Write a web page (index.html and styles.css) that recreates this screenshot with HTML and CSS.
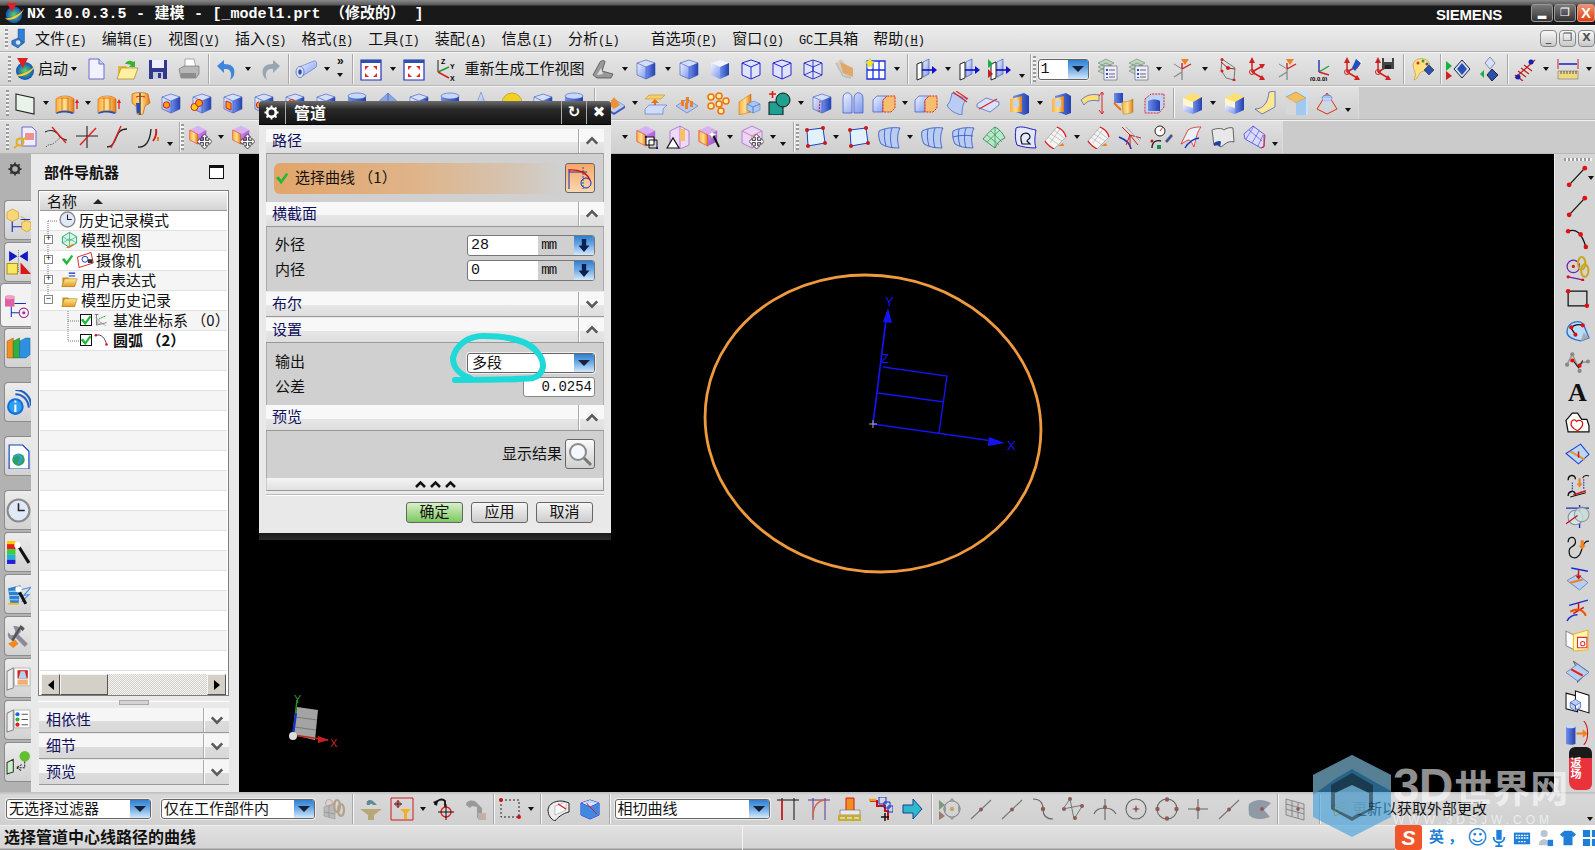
FILE: index.html
```html
<!DOCTYPE html>
<html lang="zh-CN">
<head>
<meta charset="utf-8">
<title>NX 10.0.3.5 - 建模</title>
<link rel="stylesheet" href="styles.css">
</head>
<body>
<svg class="defs" width="0" height="0" aria-hidden="true">
<defs>
<linearGradient id="bl" x1="0" y1="0" x2="1" y2="1"><stop offset="0" stop-color="#eef2ff"/><stop offset="1" stop-color="#7d98ee"/></linearGradient>
<linearGradient id="br" x1="0" y1="0" x2="1" y2="0"><stop offset="0" stop-color="#6f8fe8"/><stop offset="1" stop-color="#2340b0"/></linearGradient>
<linearGradient id="og" x1="0" y1="0" x2="1" y2="0"><stop offset="0" stop-color="#ffb040"/><stop offset=".5" stop-color="#ffe090"/><stop offset="1" stop-color="#e07810"/></linearGradient>
<linearGradient id="yl" x1="0" y1="0" x2="0" y2="1"><stop offset="0" stop-color="#ffe890"/><stop offset="1" stop-color="#e89a20"/></linearGradient>
<linearGradient id="pu" x1="0" y1="0" x2="1" y2="1"><stop offset="0" stop-color="#d090f0"/><stop offset="1" stop-color="#9040c0"/></linearGradient>
<radialGradient id="gb"><stop offset="0" stop-color="#60d060"/><stop offset="1" stop-color="#1050c0"/></radialGradient>

<symbol id="mlg" viewBox="0 0 20 24"><path d="M9 1h7v15l-4 3-3-2z" fill="#2f80d8" stroke="#114a90" stroke-width=".6"/><path d="M9 1l3-1h5l-1 1z" fill="#a8d0f4"/><path d="M2 14l7-3 6 5-6 6-7-4z" fill="#3a78c8" stroke="#114a90" stroke-width=".6"/><circle cx="9" cy="16" r="2.500" fill="#d8e8f8"/></symbol>
<symbol id="cube" viewBox="0 0 24 24"><path d="M3 6 12 3l9 3-9 4z" fill="#d3def9"/><path d="M3 6l9 4v12l-9-4z" fill="url(#bl)"/><path d="M12 10l9-4v12l-9 4z" fill="url(#br)"/><path d="M3 6 12 3l9 3v12l-9 4-9-4zM3 6l9 4 9-4M12 10v12" fill="none" stroke="#3a55c0" stroke-width=".6"/></symbol>
<symbol id="cubef" viewBox="0 0 24 24"><path d="M3 6 12 3l9 3-9 4z" fill="#f0f4ff"/><path d="M3 6l9 4v12l-9-4z" fill="url(#bl)"/><path d="M12 10l9-4v12l-9 4z" fill="url(#br)"/></symbol>
<symbol id="wire" viewBox="0 0 24 24"><path d="M3 6 12 3l9 3v12l-9 4-9-4z" fill="#dfe4fb"/><path d="M3 6 12 3l9 3v12l-9 4-9-4zM3 6l9 4 9-4M12 10v12" fill="none" stroke="#2424d8" stroke-width="1"/></symbol>
<symbol id="wire2" viewBox="0 0 24 24"><path d="M3 6 12 3l9 3v12l-9 4-9-4z" fill="#dfe4fb"/><path d="M3 6 12 3l9 3v12l-9 4-9-4zM3 6l9 4 9-4M12 10v12M3 18l9-4 9 4M12 3v11" fill="none" stroke="#2424c0" stroke-width=".9"/></symbol>
<symbol id="nx" viewBox="0 0 24 24"><circle cx="12" cy="14" r="9" fill="url(#gb)"/><path d="M2 18C8 22 20 16 23 7c-3 5-12 11-21 11z" fill="#ffd030"/><path d="M4 1h11l-5 10z" fill="#e02020"/></symbol>
<symbol id="doc" viewBox="0 0 24 24"><path d="M5 2h10l5 5v15H5z" fill="#f2f2ff" stroke="#6a6ad0"/><path d="M15 2v5h5" fill="#d0d0f8" stroke="#6a6ad0"/></symbol>
<symbol id="folder" viewBox="0 0 24 24"><path d="M3 9h8l2 2h7v10H3z" fill="#e0b840"/><path d="M2 22 6 11h17l-4 11z" fill="#fff0a0" stroke="#a88820" stroke-width=".7"/><path d="M10 7c2-4 6-4 8-2l2-1v6h-6l2-2c-2-1-4-1-6-1z" fill="#38b030"/></symbol>
<symbol id="save" viewBox="0 0 24 24"><path d="M3 3h18v19H3z" fill="#303890"/><path d="M6 3h12v8H6z" fill="#eef"/><path d="M7 15h10v7H7z" fill="#c8c8d8"/><path d="M12 16h3v5h-3z" fill="#303890"/></symbol>
<symbol id="print" viewBox="0 0 24 24"><path d="M8 2h9l2 9H8z" fill="#fff" stroke="#777" stroke-width=".6"/><path d="M2 12l5-3h15v8l-3 4H4z" fill="#b8b8b8" stroke="#666" stroke-width=".6"/><path d="M4 16h15v5H4z" fill="#8c8c8c"/></symbol>
<symbol id="undo" viewBox="0 0 24 24"><path d="M2 9l7-6v4c7 0 12 3 10 11-1 3-3 4-4 5 1-3 2-6 0-9-1-2-3-2-6-2v4z" fill="#3f86d8"/></symbol>
<symbol id="redo" viewBox="0 0 24 24"><path d="M22 9l-7-6v4C8 7 3 10 5 18c1 3 3 4 4 5-1-3-2-6 0-9 1-2 3-2 6-2v4z" fill="#96a6b2"/></symbol>
<symbol id="tube" viewBox="0 0 24 24"><path d="M5 10 20 4c3-1 4 5 1 7L7 20z" fill="url(#bl)" stroke="#5070c0" stroke-width=".6"/><ellipse cx="6" cy="15" rx="4" ry="5.500" fill="#d8e4fa" stroke="#4060b0" stroke-width=".7"/><ellipse cx="6" cy="15" rx="1.800" ry="2.800" fill="#3050a0"/></symbol>
<symbol id="fit" viewBox="0 0 24 24"><path d="M2 3h20v20H2z" fill="#fff" stroke="#2030c0" stroke-width="1.200"/><path d="M2 3h20v3H2z" fill="#2a50b0"/><path d="M6 9h4l-4 4zM18 9h-4l4 4zM6 20h4l-4-4zM18 20h-4l4-4z" fill="#e82820"/></symbol>
<symbol id="xyz" viewBox="0 0 24 24"><path d="M5 15V3" stroke="#222" fill="none"/><path d="M5 15l11-5" stroke="#20a030" stroke-width="1.500" fill="none"/><path d="M5 15l11 6" stroke="#d02020" stroke-width="1.500" fill="none"/><text x="8" y="7" font-size="7" font-family="Liberation Sans" font-weight="700">Z</text><text x="17" y="12" font-size="7" font-family="Liberation Sans" font-weight="700">Y</text><text x="17" y="24" font-size="7" font-family="Liberation Sans" font-weight="700">X</text></symbol>
<symbol id="shade" viewBox="0 0 24 24"><path d="M2 18 9 5c2-2 5-2 5 0l-3 9 11 3-2 4H6z" fill="#999" stroke="#444" stroke-width=".7"/><path d="M6 18l4-7 2 6z" fill="#ddd"/></symbol>
<symbol id="sect" viewBox="0 0 24 24"><path d="M4 6l5-4 11 12-1 7-8-4z" fill="#cfc8b8" opacity=".8"/><path d="M8 5l13 6v9l-10-4z" fill="#e0a868"/><path d="M4 6l7 13 8 2" fill="none" stroke="#b8b8b8" stroke-width="1.400"/></symbol>
<symbol id="wgrid" viewBox="0 0 24 24"><path d="M4 4h18v18H4zM10 4v18M16 4v18M4 13h18" fill="#fff" stroke="#1a30e0" stroke-width="1.300"/><path d="M7 1l1.500 3 3.500 1-3 2 .5 3.500L7 9l-3 2 .5-4-3-2 3.500-1z" fill="#ffe020" stroke="#8cc" stroke-width=".5"/></symbol>
<symbol id="slab" viewBox="0 0 24 24"><path d="M9 5l6-3v15l-6 3z" fill="url(#bl)" stroke="#3050b0" stroke-width=".6"/><path d="M3 7l5-2v16l-5 2z" fill="#fff" stroke="#222"/><path d="M8 13h11" stroke="#1010c8" stroke-width="1.600"/><path d="M18 9l5 4-5 4z" fill="#1010c8"/></symbol>
<symbol id="slab2" viewBox="0 0 24 24"><use href="#slab" width="24" height="24"/><path d="M0 2l5 5-5 4z" fill="#18b040"/><path d="M0 12l5 5-5 4z" fill="#c82020"/></symbol>
<symbol id="layers" viewBox="0 0 24 24"><path d="M3 6l8-4 8 4-8 4zM3 10l8-4 8 4-8 4zM3 14l8-4 8 4-8 4z" fill="#b8d8b8" stroke="#667" stroke-width=".5"/><path d="M9 9h13v14H9z" fill="#eef" stroke="#556" stroke-width=".6"/><path d="M11 12h2v2h-2zM11 16h2v2h-2zM11 20h2v1h-2z" fill="#2850c0"/><path d="M14 13h6M14 17h6M14 20h6" stroke="#666"/></symbol>
<symbol id="cs1" viewBox="0 0 24 24"><path d="M11 12V23M11 15l-8 5" stroke="#888" stroke-width="1.300" fill="none"/><path d="M11 12l9-5M11 12V6" stroke="#d02020" stroke-width="1.400" fill="none"/><path d="M10 2h8l-4 6z" fill="#f08020"/><path d="M11 12 3 7" stroke="#888"/></symbol>
<symbol id="cs2" viewBox="0 0 24 24"><path d="M8 2l13 9-1 12-8-2-5-8z" fill="none" stroke="#777"/><g fill="#d02020"><circle cx="8" cy="2.500" r="1.500"/><circle cx="8" cy="14" r="1.500"/><circle cx="20" cy="23" r="1.500"/><circle cx="14" cy="11" r="2"/></g><path d="M7 5l7 6 7 1" stroke="#a02020" fill="none"/></symbol>
<symbol id="cs3" viewBox="0 0 24 24"><path d="M7 15V2" stroke="#d02020" stroke-width="1.500"/><path d="M7 15l12-7M7 15l12 7" stroke="#d02020" stroke-width="1.500"/><path d="M7 0 4 6h6z" fill="#d02020"/><path d="M20 7l-6 0 3 5zM20 23l-6 0 3-5z" fill="#d02020"/><circle cx="7" cy="15" r="2.500" fill="none" stroke="#d02020"/></symbol>
<symbol id="cs4" viewBox="0 0 24 24"><path d="M10 15V3" stroke="#2030c0" stroke-width="1.400"/><path d="M10 15l10-6" stroke="#20a030" stroke-width="1.400"/><path d="M10 15l10 3" stroke="#d02020" stroke-width="1.400"/><text x="1" y="24" font-size="6" font-family="Liberation Sans" font-weight="700">(0,0,0)</text></symbol>
<symbol id="cs5" viewBox="0 0 24 24"><use href="#cs3" width="24" height="24"/><path d="M16 2l5 4-6 8-3-3z" fill="#2050c0"/><path d="M17 2l5 4" stroke="#fff"/></symbol>
<symbol id="cs6" viewBox="0 0 24 24"><use href="#cs3" width="24" height="24"/><path d="M11 1h12v11H11z" fill="#444"/><path d="M13 1h8v4h-8z" fill="#ddd"/><path d="M14 8h6v4h-6z" fill="#222"/></symbol>
<symbol id="palette" viewBox="0 0 24 24"><path d="M3 5c4-6 17-4 16 5-1 5-8 3-10 6-2 2-2 6-6 7 1-3 2-5 1-8-1-3-3-6-1-10z" fill="#ffe080" stroke="#b89020" stroke-width=".6"/><circle cx="7" cy="6" r="1.500" fill="#d03030"/><circle cx="12" cy="4" r="1.500" fill="#30a030"/><circle cx="16" cy="7" r="1.500" fill="#3050d0"/><path d="M13 13l5-5 5 5-5 5z" fill="#2a50b0" stroke="#111" stroke-width=".5"/></symbol>
<symbol id="dia1" viewBox="0 0 24 24"><path d="M0 4l6 5-6 5z" fill="#18b040"/><path d="M0 14l6 5-6 4z" fill="#d02020"/><path d="M8 12l8-9 8 9-8 9z" fill="#cfe0f8" stroke="#223"/><path d="M11 12l5-6 5 6-5 6z" fill="#2a50b0"/></symbol>
<symbol id="dia2" viewBox="0 0 24 24"><path d="M8 6l5-6 5 6-5 6z" fill="#d4e2fa" stroke="#88a"/><path d="M3 17l4-4v8z" fill="#18b040"/><path d="M10 18l5-6 6 6-6 6z" fill="#2a50b0" stroke="#223"/></symbol>
<symbol id="ruled" viewBox="0 0 24 24"><path d="M2 21 22 3M2 18l8 6M5 14l8 6M8 11l8 6M11 8l8 6" stroke="#c02020" stroke-width="1.300" fill="none"/><circle cx="5" cy="20" r="2.500" fill="#1520b0"/><circle cx="18" cy="5" r="2.500" fill="#1520b0"/></symbol>
<symbol id="meas" viewBox="0 0 24 24"><path d="M2 2v10M22 2v10" stroke="#d02020"/><path d="M3 7h18" stroke="#1520c0" stroke-width="1.500"/><path d="M2 14h20v8H2z" fill="#f0d880" stroke="#777" stroke-width=".6"/><path d="M5 14v3M8 14v3M11 14v3M14 14v3M17 14v3M20 14v3" stroke="#555"/></symbol>
<symbol id="plane" viewBox="0 0 24 24"><path d="M3 3l18 4v16L3 19z" fill="#e8f4e8" stroke="#222" stroke-width="1.100"/></symbol>
<symbol id="ext" viewBox="0 0 24 24"><path d="M1 8c4-4 14-4 18 0v14c-4-3-14-3-18 0z" fill="url(#og)" stroke="#d06000" stroke-width=".6"/><path d="M1 8c4-3 14-3 18 0" fill="#ffa040"/><path d="M7 7v13M13 7v13" stroke="#b06000" stroke-width=".7"/><path d="M1 22c4-3 14-3 18 0l-2 1c-4-2-12-2-15 0z" fill="#2050c0"/><path d="M22 10v8" stroke="#e02020" stroke-width="1.300"/><path d="M20 12l2-4 2 4z" fill="#e02020"/></symbol>
<symbol id="rev" viewBox="0 0 24 24"><path d="M4 3c4-2 12-2 16 0l2 9-5 3-2 8-3 1-3-1-1-8-4-3z" fill="url(#og)" stroke="#c05000" stroke-width=".6"/><path d="M12 2v22" stroke="#222" stroke-width="1.200"/><path d="M8 6c3-1 6-1 9 0" stroke="#d02020" fill="none"/><path d="M8 12h4v11l-3-1z" fill="#2050c0"/></symbol>
<symbol id="cubeh" viewBox="0 0 24 24"><use href="#cube" width="24" height="24"/><circle cx="7.500" cy="14" r="3.200" fill="#f8a010" stroke="#d02020"/></symbol>
<symbol id="cubeb" viewBox="0 0 24 24"><use href="#cube" width="24" height="24"/><circle cx="4.500" cy="16" r="3.500" fill="#f8d010" stroke="#d02020"/><circle cx="9" cy="12" r="3.500" fill="#f8a010" stroke="#d02020"/></symbol>
<symbol id="cubep" viewBox="0 0 24 24"><use href="#cube" width="24" height="24"/><path d="M5 10l5 2v7l-5-2z" fill="#f8a010" stroke="#d02020"/></symbol>
<symbol id="cyl" viewBox="0 0 24 24"><path d="M3 5v15c2 3 16 3 18 0V5z" fill="url(#br)"/><ellipse cx="12" cy="5" rx="9" ry="3" fill="#c8d6f8" stroke="#4060c0" stroke-width=".6"/></symbol>
<symbol id="cone" viewBox="0 0 24 24"><path d="M12 1 5 20c3 3 11 3 14 0z" fill="url(#bl)" stroke="#5070c0" stroke-width=".5"/></symbol>
<symbol id="sph" viewBox="0 0 24 24"><circle cx="12" cy="12" r="10" fill="#f4d020" stroke="#a89010" stroke-width=".6"/></symbol>
<symbol id="pyr" viewBox="0 0 24 24"><path d="M12 2 1 12l11 8 11-8z" fill="#8aa4e8" stroke="#5070c0" stroke-width=".6"/><path d="M12 2v18" stroke="#5070c0"/></symbol>
<symbol id="pad" viewBox="0 0 24 24"><path d="M1 15l11-7 11 7-11 7z" fill="#c0d0f4" stroke="#5070c0" stroke-width=".6"/><path d="M1 15v2l11 7 11-7v-2l-11 7z" fill="#3a58c0"/><path d="M7 14l5-8 6 8-6 4z" fill="#f09030"/></symbol>
<symbol id="oset" viewBox="0 0 24 24"><path d="M5 4h16l-4 4H1z" fill="#f8d060" stroke="#c08010" stroke-width=".5"/><path d="M11 18V11" stroke="#f07010" stroke-width="2"/><path d="M7 12l4-4 4 4z" fill="#f07010"/><path d="M1 18l4-4h18l-4 4v5H1z" fill="#d0dcfa" stroke="#5070c0" stroke-width=".6"/></symbol>
<symbol id="pins" viewBox="0 0 24 24"><path d="M1 15 12 8l11 7-11 7z" fill="#b8c8f0" stroke="#5070c0" stroke-width=".6"/><g fill="#f08020"><path d="M6 9h3v6H6zM11 6h3v6h-3zM15 10h3v6h-3zM10 12h3v6h-3z"/></g></symbol>
<symbol id="hexp" viewBox="0 0 24 24"><g fill="#fff0a0" stroke="#f07010" stroke-width="1.500"><circle cx="5" cy="6" r="3"/><circle cx="13" cy="5" r="3"/><circle cx="20" cy="10" r="3"/><circle cx="5" cy="15" r="3"/><circle cx="13" cy="13" r="3"/><circle cx="15" cy="20" r="3"/></g></symbol>
<symbol id="split" viewBox="0 0 24 24"><path d="M2 11 14 3v18L2 24z" fill="url(#og)" stroke="#d06000" stroke-width=".5"/><path d="M10 13l7-3 6 3-7 3zM10 13v6l6 3v-6zM16 16v6l7-3v-6z" fill="#a8c8f4" stroke="#5070c0" stroke-width=".5"/></symbol>
<symbol id="teal" viewBox="0 0 24 24"><path d="M1 11h14v13H1z" fill="#20a090" stroke="#111"/><circle cx="15" cy="9" r="7" fill="#20a090" stroke="#111"/><path d="M1 3h7M4.500 0v7" stroke="#e01818" stroke-width="1.600"/></symbol>
<symbol id="boxd" viewBox="0 0 24 24"><use href="#cube" width="24" height="24"/><path d="M10 10l-1 12" stroke="#e02020" stroke-dasharray="2 1"/></symbol>
<symbol id="arch" viewBox="0 0 24 24"><path d="M2 22V7c0-7 9-7 9 0v15zM13 22V7c0-7 9-7 9 0v15z" fill="url(#bl)" stroke="#3a55c0" stroke-width=".7"/></symbol>
<symbol id="boxo" viewBox="0 0 24 24"><path d="M1 9l4-4h10l-4 4v12H1z" fill="url(#bl)" stroke="#3a55c0" stroke-width=".7"/><path d="M11 9l4-4h8v12l-4 4h-8z" fill="#f4c070" stroke="#e02020" stroke-dasharray="2 1"/></symbol>
<symbol id="srf" viewBox="0 0 24 24"><path d="M7 2 22 8c-4 3-5 9-5 16-7-1-14-6-15-10 3-2 4-7 5-12z" fill="#b8ccf4" stroke="#4060c0" stroke-width=".7"/><path d="M8 1l14 10M11 0l12 8" stroke="#e02020" stroke-width="1.100"/></symbol>
<symbol id="rhom" viewBox="0 0 24 24"><path d="M1 13l9-6 13 4v3l-9 7L1 16z" fill="#d8e2fa" stroke="#4060c0" stroke-width=".7"/><path d="M3 18 21 8" stroke="#e02020" stroke-width="1.200"/></symbol>
<symbol id="fram" viewBox="0 0 24 24"><path d="M6 5l11-3 5 3v17l-5 2L6 20z" fill="url(#br)"/><path d="M3 8l12-3v16H3z" fill="url(#og)"/><path d="M6 10l6-1v7H6z" fill="#c0d4f8"/></symbol>
<symbol id="ribb" viewBox="0 0 24 24"><path d="M1 9c6-6 13-6 18-5v6c-5-1-12-1-15 4z" fill="#ffe070" stroke="#3a55c0" stroke-width=".7"/><path d="M22 2v20M19 5l3-4 3 4M19 19l3 4 3-4" stroke="#e02020" fill="none"/></symbol>
<symbol id="ocyl" viewBox="0 0 24 24"><path d="M3 2h9v10H3z" fill="url(#br)"/><path d="M11 11c4 0 8-1 11-3v13c-3 2-7 2-10 2z" fill="url(#og)" stroke="#a08020" stroke-width=".5"/><path d="M3 12l7 7" stroke="#f07010" stroke-width="2"/></symbol>
<symbol id="rbox" viewBox="0 0 24 24"><path d="M3 8l6-5h13v13l-5 6H3z" fill="#c0d4f8" stroke="#e02020" stroke-dasharray="2 1"/><path d="M6 10c4-2 9-2 12 0v10H6z" fill="url(#br)"/></symbol>
<symbol id="cham" viewBox="0 0 24 24"><path d="M3 7l10-5 9 4-9 5z" fill="#ffe070"/><path d="M3 7l10 4v6L3 14z" fill="#fff6d0"/><path d="M3 14l10 3v6L3 20z" fill="url(#bl)"/><path d="M13 11l9-5v13l-9 4z" fill="url(#br)"/></symbol>
<symbol id="corn" viewBox="0 0 24 24"><path d="M16 1l6-1v16L9 23 2 18c8 0 13-6 14-17z" fill="#ffe890" stroke="#3050c0" stroke-width=".7"/></symbol>
<symbol id="pale" viewBox="0 0 24 24"><path d="M2 0h22v24H2z" fill="#c8e2f8"/><path d="M2 6l10-5 10 6-10 5z" fill="#f0c060" stroke="#c06020" stroke-width=".5"/><path d="M12 12v12H2V6z" fill="#d8d8d8"/><path d="M12 12l10-5v17H12z" fill="#a0c8f0"/></symbol>
<symbol id="wcone" viewBox="0 0 24 24"><path d="M12 2 2 18l10 5 10-5z" fill="none" stroke="#d83020"/><ellipse cx="12" cy="7" rx="5" ry="3" fill="#a8c4f4" stroke="#3050c0" stroke-width=".6"/><path d="M7 7 12 21 17 7" fill="#c8d8f8" opacity=".7"/></symbol>
<symbol id="keyd" viewBox="0 0 24 24"><path d="M9 2h10l4 4v15H9z" fill="#eef" stroke="#6a6ad0"/><path d="M12 8h9v7h-9z" fill="#f09090"/><circle cx="7" cy="17" r="3.500" fill="none" stroke="#e0b020" stroke-width="2"/><path d="M5 20l-4 3M14 12l-5 3" stroke="#e0b020" stroke-width="2"/></symbol>
<symbol id="cv1" viewBox="0 0 24 24"><path d="M1 7c8-4 13 1 15 5 3 2 5 3 7 3" fill="none" stroke="#222" stroke-width="1.100"/><path d="M2 22c3-4 5-1 8-4 4-3 4-4 6-5" fill="none" stroke="#666" stroke-dasharray="1.500 1"/><path d="M8 2l14 16" stroke="#e02020" stroke-width="1.400"/></symbol>
<symbol id="cv2" viewBox="0 0 24 24"><path d="M12 1v22M1 11h22" stroke="#222" stroke-width="1.100"/><path d="M5 20 21 3" stroke="#e02020" stroke-width="1.400"/></symbol>
<symbol id="cv3" viewBox="0 0 24 24"><path d="M1 22c5 0 7-4 9-9s4-9 11-9" fill="none" stroke="#222" stroke-width="1.300"/><path d="M15 1 5 23" stroke="#e02020" stroke-width="1.400"/></symbol>
<symbol id="cv4" viewBox="0 0 24 24"><path d="M1 22c7 1 12-5 13-18" fill="none" stroke="#222" stroke-width="1.300"/><path d="M19 4c1 5 0 8-3 12" fill="none" stroke="#d02020" stroke-width="2"/><path d="M21 12v4" stroke="#f08020" stroke-width="2"/></symbol>
<symbol id="pcube" viewBox="0 0 24 24"><path d="M2 6l10-5 10 5-10 5z" fill="#d8b0f4"/><path d="M2 6l10 5v12L2 18z" fill="url(#og)" stroke="#e02020" stroke-width=".6"/><path d="M12 11l10-5v12l-10 5z" fill="url(#pu)"/></symbol>
<symbol id="mv" viewBox="0 0 14 14"><path d="M7 0l3 3H8v3h3V4l3 3-3 3V8H8v3h2l-3 3-3-3h2V8H3v2L0 7l3-3v2h3V3H4z" fill="#fff" stroke="#111" stroke-width=".7"/></symbol>
<symbol id="pmv" viewBox="0 0 24 24"><use href="#pcube" width="20" height="20"/><use href="#mv" x="9" y="9" width="15" height="15"/></symbol>
<symbol id="prc" viewBox="0 0 24 24"><use href="#pcube" width="22" height="22"/><path d="M11 12h8v8h-8z" fill="#fff" stroke="#111"/><path d="M14 15h8v8h-8z" fill="none" stroke="#111"/><g fill="#1010c0"><path d="M10 11h2v2h-2zM21 22h2v2h-2z"/></g></symbol>
<symbol id="ptr" viewBox="0 0 24 24"><path d="M4 6l10-5 9 5v14l-9 4-10-4z" fill="#f0d8f8" stroke="#b080d0"/><path d="M14 1v23" stroke="#b080d0"/><path d="M14 4h5v12h-5z" fill="#f8c060"/><path d="M1 23l6-10 6 10z" fill="#fff" stroke="#111" stroke-width="1.200"/></symbol>
<symbol id="pwd" viewBox="0 0 24 24"><use href="#pcube" width="22" height="22"/><path d="M16 10l6 12" stroke="#111" stroke-width="2"/><path d="M15 4l1 4 4 1-4 2-1 3-1-3-3-2 3-1z" fill="#fff" stroke="#888" stroke-width=".4"/></symbol>
<symbol id="pmv2" viewBox="0 0 24 24"><path d="M2 6l10-5 10 5v12l-10 5-10-5z" fill="#ead4f8" stroke="#b080d0"/><path d="M2 6l10 5 10-5M12 11v12" fill="none" stroke="#e08090"/><use href="#mv" x="9" y="9" width="15" height="15"/></symbol>
<symbol id="quad" viewBox="0 0 24 24"><path d="M4 5l16-2 2 15-17 3z" fill="#e2f2fc" stroke="#2040c0"/><g fill="#c81818"><circle cx="4" cy="5" r="2"/><circle cx="20" cy="3" r="2"/><circle cx="22" cy="18" r="2"/><circle cx="5" cy="21" r="2"/></g></symbol>
<symbol id="rib" viewBox="0 0 24 24"><path d="M2 6c6-3 14-4 21-3-3 6-3 13-1 20-7 0-13-1-18-4C2 15 1 10 2 6z" fill="#b8ccf4" stroke="#3050c0" stroke-width=".8"/><path d="M8 4c-1 5-1 10 1 17M15 3c-2 6-2 13 0 20" fill="none" stroke="#3050c0" stroke-width=".8"/></symbol>
<symbol id="rib2" viewBox="0 0 24 24"><use href="#rib" width="24" height="24"/><path d="M2 12c7-2 13-2 20-1" fill="none" stroke="#3050c0" stroke-width=".8"/></symbol>
<symbol id="grn" viewBox="0 0 24 24"><path d="M1 14C6 8 10 4 13 2c4 2 8 6 10 11-5 2-8 5-10 10-4-3-8-6-12-9z" fill="#b8e8c8" stroke="#208050" stroke-width=".8"/><path d="M5 10l12 10M9 6l11 11M13 2v21M5 17 18 5" stroke="#208050" stroke-width=".6"/></symbol>
<symbol id="bpt" viewBox="0 0 24 24"><path d="M3 3c6-3 13 1 20 2-1 6-2 12 0 18-7 0-14-1-19-3C2 15 2 9 3 3z" fill="#e4e8fc" stroke="#2020c0" stroke-width="1"/><path d="M8 15c-2-8 9-9 9-3 0 3-3 2-3 4l3 3H9z" fill="none" stroke="#111" stroke-width="1.200"/></symbol>
<symbol id="rgrid" viewBox="0 0 24 24"><path d="M1 16 13 2c5 2 8 6 9 10L10 24C7 22 3 20 1 16z" fill="#f4f4f4" stroke="#888" stroke-width=".5"/><path d="M4 12l11 8M7 9l11 7M10 5l11 9M6 18 16 4" stroke="#aaa" stroke-width=".6"/><path d="M1 16c2 4 6 6 9 8" fill="none" stroke="#e02020" stroke-width="1.300"/><path d="M13 2c5 2 8 6 9 10" fill="none" stroke="#e02020" stroke-width="1.300"/><path d="M14 21l5-3 1 3z" fill="#f08020"/></symbol>
<symbol id="frm" viewBox="0 0 24 24"><path d="M1 12c5 2 11 6 12 12" fill="none" stroke="#1030c0" stroke-width="1.600"/><path d="M12 10 4 2 M12 10l11 3M12 10V22M12 10l8 10M12 10l-4 10" stroke="#d02020" stroke-width="1"/><path d="M8 2l14 14" stroke="#aab" /></symbol>
<symbol id="dial" viewBox="0 0 24 24"><circle cx="11" cy="6" r="5" fill="#fff" stroke="#222"/><path d="M11 6l3-4" stroke="#d02020"/><path d="M16 16l6-7 2 2-6 7z" fill="#3050c0" stroke="#e0a020" stroke-width=".5"/><path d="M3 23c0-7 5-8 9-7" fill="none" stroke="#222" stroke-width="1.400"/><circle cx="3" cy="16" r="1.500" fill="#c01818"/><path d="M8 20h4v4H8z" fill="#109050"/></symbol>
<symbol id="brl" viewBox="0 0 24 24"><path d="M1 19 8 5c5-3 9-3 13-3-4 5-5 11-7 20-2-3-2-6-5-7-3 0-5 3-8 4z" fill="#e8f2f8" stroke="#e02020" stroke-width=".8"/><path d="M5 23c3-5 7-9 14-10" fill="none" stroke="#1030c0" stroke-width="1.300"/></symbol>
<symbol id="whts" viewBox="0 0 24 24"><path d="M1 5c5-2 10-2 12 0 2-2 7-3 9-2l1 14c-3-1-7 0-9 2l-4 3c-1-2-4-3-7-2z" fill="#e8e8e8" stroke="#444" stroke-width=".8"/><path d="M3 18c3-2 6-3 7-1l-1 5c-2-2-4-2-6-1z" fill="#2040a0"/></symbol>
<symbol id="pgrid" viewBox="0 0 24 24"><path d="M2 9l9-8 12 9-1 11-3 2-16-9z" fill="#dcdcfa" stroke="#5050e0" stroke-width=".9"/><path d="M7 5l13 11M12 1 4 14M17 6l-7 12M21 10l-5 11" stroke="#5050e0" stroke-width=".7"/><path d="M22 10v12l-3 1" fill="none" stroke="#e02020"/></symbol>

<symbol id="line" viewBox="0 0 24 24"><path d="M4 20 19 4" stroke="#111" stroke-width="1.200"/><circle cx="4" cy="20" r="2.300" fill="#e01010"/><circle cx="19" cy="4" r="2.300" fill="#e01010"/></symbol>
<symbol id="arc3" viewBox="0 0 24 24"><path d="M3 6c7-3 13 1 17 15" fill="none" stroke="#111" stroke-width="1.200"/><circle cx="3" cy="6" r="2.200" fill="#e01010"/><circle cx="15" cy="9" r="2.200" fill="#e01010"/><circle cx="20" cy="21" r="2.200" fill="#e01010"/></symbol>
<symbol id="ptch" viewBox="0 0 24 24"><circle cx="8" cy="10" r="6" fill="none" stroke="#7020b0" stroke-width="1.200"/><circle cx="8" cy="10" r="1.500" fill="#e01010"/><path d="M3 20l14 3" stroke="#7020b0" stroke-width="1.200"/><circle cx="3" cy="20" r="1.500" fill="#e01010"/><circle cx="17" cy="23" r="1.500" fill="#e01010"/><g fill="none" stroke="#c8a820" stroke-width="2"><ellipse cx="16" cy="7" rx="3.500" ry="6"/><ellipse cx="19" cy="14" rx="3.500" ry="6"/></g></symbol>
<symbol id="rect" viewBox="0 0 24 24"><path d="M3 4h18v14H3z" fill="none" stroke="#111" stroke-width="1.200"/><circle cx="3" cy="4" r="2.200" fill="#e01010"/><circle cx="21" cy="18" r="2.200" fill="#e01010"/></symbol>
<symbol id="bluearc" viewBox="0 0 24 24"><path d="M2 12C3 3 15 1 18 7l5 12-8 3C8 21 1 18 2 12z" fill="#b8ddf8" stroke="#2a70d0" stroke-width="1.300"/><path d="M18 14l5 5-8 3z" fill="#aaa"/><path d="M6 10c2-4 8-4 11-3M6 10l4 6" fill="none" stroke="#111" stroke-width="1.200"/><circle cx="6" cy="9" r="2" fill="#e01010"/><circle cx="17" cy="7" r="2" fill="#e01010"/><circle cx="10" cy="16" r="2" fill="#e01010"/></symbol>
<symbol id="stud" viewBox="0 0 24 24"><path d="M2 15l5-10 5 11 5-3 6-1" fill="none" stroke="#999" stroke-width="1.500"/><path d="M7 10l6 8 4-7" fill="none" stroke="#111"/><g fill="#888"><circle cx="2" cy="15" r="2"/><circle cx="7" cy="5" r="2"/><circle cx="22" cy="12" r="2"/><circle cx="14" cy="21" r="2"/></g><circle cx="7" cy="11" r="2" fill="#e01010"/><circle cx="14" cy="16" r="2" fill="#e01010"/></symbol>
<symbol id="heart" viewBox="0 0 24 24"><path d="M7 2h5l4 6h5l2 6v6H3L1 9z" fill="#fff" stroke="#111" stroke-width="1.200"/><path d="M12 19c-4-2-7-5-6-8 1-3 4-3 5-1 2-2 6-1 6 2 0 3-2 5-5 7z" fill="none" stroke="#e01010" stroke-width="1.200"/></symbol>
<symbol id="srfb" viewBox="0 0 24 24"><path d="M1 11 15 2l8 10-10 9z" fill="#b8d8f8" stroke="#2040d0" stroke-width="1"/><path d="M5 9l14 8" stroke="#e89030" stroke-width="2"/><path d="M13 15V9" stroke="#d01010" stroke-width="1.400"/></symbol>
<symbol id="cfold" viewBox="0 0 24 24"><path d="M3 7c0-6 7-6 7-1M3 22c0-5 7-6 7-1" fill="none" stroke="#111" stroke-width="1.300"/><path d="M17 5c1-3 5-3 6-2M5 23l15-4" stroke="#111" fill="none"/><path d="M7 9v10M18 6v10" stroke="#1030c0" stroke-dasharray="1.500 1"/><path d="M8 21l12-4" stroke="#d01010" stroke-width="1.400"/><path d="M13 5h2v5h2l-3 4-3-4h2z" fill="#f08020"/></symbol>
<symbol id="sphc" viewBox="0 0 24 24"><path d="M1 4h22M14 1v22" stroke="#1030c0" stroke-width="1.300"/><circle cx="10" cy="13" r="7" fill="#d0e4ea" stroke="#889"/><circle cx="16" cy="10" r="7" fill="#c8e0d8" opacity=".8" stroke="#889"/><path d="M1 19l11-8" stroke="#d01010" stroke-width="1.200"/></symbol>
<symbol id="cfold2" viewBox="0 0 24 24"><path d="M3 7c0-6 7-6 7-1 1 6-7 4-6 10 0 6 6 8 10 3 3-5 3-14 9-13" fill="none" stroke="#111" stroke-width="1.200"/><path d="M15 5h3v5h2l-3.500 4L13 10h2z" fill="#f08020"/></symbol>
<symbol id="plar" viewBox="0 0 24 24"><path d="M2 14 12 8l10 8-8 7z" fill="#b8cef0" stroke="#5070c0" stroke-width=".7"/><path d="M5 16l12-3" stroke="#f08020" stroke-width="2"/><path d="M6 2l16 3" stroke="#1030d0" stroke-width="1.400"/><path d="M13 4v7" stroke="#d01010" stroke-width="1.400"/><path d="M10 9h6l-3 4z" fill="#d01010"/></symbol>
<symbol id="crx" viewBox="0 0 24 24"><path d="M4 8l18-5M2 23c2-4 5-6 10-6" fill="none" stroke="#1030d0" stroke-width="1.400"/><path d="M13 5V12M8 16l10-6" stroke="#d01010" stroke-width="1.400"/><path d="M5 14c6-3 12-3 15 4" fill="none" stroke="#f05000" stroke-width="2"/></symbol>
<symbol id="bk" viewBox="0 0 24 24"><path d="M1 3l8 4v14L1 17z" fill="#fff" stroke="#888"/><path d="M8 6l14-4v19L8 22z" fill="#fff8b0" stroke="#f0b020"/><path d="M12 9h9v10h-9z" fill="#fff" stroke="#e03030"/><circle cx="17" cy="15" r="2" fill="none" stroke="#e03030"/></symbol>
<symbol id="dpl" viewBox="0 0 24 24"><path d="M8 2l14 10-10 10V10z" fill="#c8d8f0" stroke="#667"/><path d="M1 13 12 5l11 8-11 8z" fill="#b8cef0" stroke="#5070c0" stroke-width=".7"/><path d="M6 10l11 6" stroke="#e02010" stroke-width="2"/></symbol>
<symbol id="fr2" viewBox="0 0 24 24"><path d="M1 3l11 3v15L1 18z" fill="#fff" stroke="#111"/><path d="M10 1l13 4v17L10 18z" fill="#fff" stroke="#111"/><path d="M5 12l5-3 5 3-5 3zM5 12v5l5 3v-5zM15 12v5l-5 3" fill="#bcd0f4" stroke="#3050c0" stroke-width=".6"/></symbol>
<symbol id="cya" viewBox="0 0 24 24"><path d="M1 5v17c3 1 7 1 9 0V5z" fill="url(#br)"/><ellipse cx="5.500" cy="5" rx="4.500" ry="2" fill="#c8d6f8"/><path d="M11 12h8" stroke="#f08020" stroke-width="2"/><path d="M17 8l5 4-5 4z" fill="#f08020"/><path d="M18 0c5 5 5 18 0 23" fill="none" stroke="#d01010"/></symbol>

<symbol id="gline" viewBox="0 0 24 24"><path d="M2 22 22 3" stroke="#777" stroke-width="1.100"/><circle cx="12" cy="12.500" r="2" fill="#915a55"/></symbol>
<symbol id="gs" viewBox="0 0 24 24"><path d="M2 2c8 0 10 4 10 10s3 10 10 10" fill="none" stroke="#666" stroke-width="1.100"/><circle cx="12" cy="12" r="2.200" fill="#915a55"/></symbol>
<symbol id="gspl" viewBox="0 0 24 24"><path d="M1 12 8 2l4 20 9-14M1 12l20-4" fill="none" stroke="#777"/><g fill="#915a55"><circle cx="2" cy="12" r="2"/><circle cx="8" cy="2" r="2"/><circle cx="13" cy="21" r="2"/><circle cx="20" cy="9" r="2"/></g></symbol>
<symbol id="gt" viewBox="0 0 24 24"><path d="M12 2v21M1 17C4 9 19 9 23 17" fill="none" stroke="#666" stroke-width="1.100"/><circle cx="12" cy="10" r="2" fill="#915a55"/></symbol>
<symbol id="gc" viewBox="0 0 24 24"><circle cx="12" cy="12" r="10" fill="none" stroke="#666" stroke-width="1.100"/><path d="M12 8l1 3 3 1-3 1-1 3-1-3-3-1 3-1z" fill="#915a55"/></symbol>
<symbol id="gc2" viewBox="0 0 24 24"><circle cx="12" cy="12" r="10" fill="none" stroke="#666" stroke-width="1.100"/><g fill="#915a55"><circle cx="12" cy="2.500" r="2.200"/><circle cx="12" cy="21.500" r="2.200"/><circle cx="2.500" cy="12" r="2.200"/><circle cx="21.500" cy="12" r="2.200"/></g></symbol>
<symbol id="gx" viewBox="0 0 24 24"><path d="M12 2v20M2 12h20" stroke="#666" stroke-width="1.100"/><circle cx="12" cy="12" r="2.200" fill="#915a55"/></symbol>
<symbol id="gsr" viewBox="0 0 24 24"><path d="M1 7c6-5 14-5 22-1l-7 7 6 7c-8 3-17 3-21-2C1 15 0 11 1 7z" fill="#8f9aa6"/><circle cx="14" cy="12" r="2" fill="#915a55"/></symbol>
<symbol id="ggrid" viewBox="0 0 24 24"><path d="M3 2l18 5v16L3 18zM9 4v15M15 6v15M3 7l18 5M3 12l18 5" fill="#ccc" stroke="#777" stroke-width=".8"/><circle cx="15" cy="12" r="1.800" fill="#915a55"/></symbol>
<symbol id="gnode" viewBox="0 0 24 24"><path d="M1 3l6 5-6 5z" fill="#7a9a80"/><path d="M1 14l6 5-6 4z" fill="#a07a70"/><circle cx="14" cy="12" r="8" fill="none" stroke="#888" stroke-width="1.100"/><path d="M14 1l3 3h-6zM14 23l3-3h-6zM5 12l3-3v6zM23 12l-3-3v6z" fill="#999"/><circle cx="14" cy="12" r="2.200" fill="#c8a860"/></symbol>
<symbol id="ffb" viewBox="0 0 24 24"><path d="M8 8C6 2 13 2 15 5l3 3h-4c-1-1-3-2-3 0z" fill="#5f8a92"/><path d="M1 12h22l-8 6v5H9v-5z" fill="#b8a878"/></symbol>
<symbol id="ffr" viewBox="0 0 24 24"><path d="M1 1h22v22H1z" fill="none" stroke="#d01818"/><path d="M4 7h8M8 3v8" stroke="#111"/><circle cx="8" cy="7" r="2.500" fill="none" stroke="#d01818"/><path d="M10 12h11l-4 4v6h-3v-6z" fill="#f4b020"/></symbol>
<symbol id="ucr" viewBox="0 0 24 24"><path d="M3 8C4 3 10 1 13 4v6" fill="none" stroke="#111" stroke-width="1.800"/><path d="M1 5l5-2-1 6z" fill="#111"/><circle cx="14" cy="15" r="5" fill="none" stroke="#e01818" stroke-width="1.300"/><path d="M14 7v16M6 15h16" stroke="#111"/></symbol>
<symbol id="gch" viewBox="0 0 24 24"><path d="M3 8c0-5 8-6 11-2l5 5v10h-5V10l-5-1-2 2z" fill="#999"/><path d="M15 16h8v7h-8z" fill="#c0b0a8"/></symbol>
<symbol id="lnk" viewBox="0 0 24 24"><path d="M3 10l11-4v16l-11-3z" fill="#b0b0b0" stroke="#888" stroke-width=".6"/><path d="M3 15l11 2M8 8v13" stroke="#888" fill="none"/><circle cx="8" cy="6" r="3.500" fill="none" stroke="#c09090"/><g fill="none" stroke="#a89070" stroke-width="2.200"><ellipse cx="16" cy="9" rx="3" ry="6"/><ellipse cx="20" cy="13" rx="3" ry="6"/></g></symbol>
<symbol id="drect" viewBox="0 0 24 24"><path d="M3 3h18v17H3z" fill="none" stroke="#222" stroke-dasharray="2 2"/><circle cx="3" cy="3" r="2" fill="#d01010"/><circle cx="21" cy="20" r="2" fill="#d01010"/></symbol>
<symbol id="rsec" viewBox="0 0 24 24"><path d="M1 12C3 4 14 2 22 6v9c-6 1-12 6-14 9-4-2-7-5-7-12z" fill="#eee" stroke="#222"/><path d="M8 9l11-4v8L8 18z" fill="#fff" stroke="#888" stroke-width=".5"/><path d="M11 7l8 5" stroke="#e01818" stroke-width="1.300"/></symbol>
<symbol id="bsec" viewBox="0 0 24 24"><use href="#wire" width="24" height="24"/><path d="M3 6l9 4 9-4v12l-9 4-9-4z" fill="#3f8ae0"/><path d="M12 10 7 4M12 10l7 7" stroke="#e01818"/><path d="M3 6 12 3l9 3" fill="#bcdcf8"/></symbol>
<symbol id="t1" viewBox="0 0 24 24"><path d="M1 3h22M6 1v22M18 1v22" fill="none" stroke="#111"/><path d="M6 3v20" stroke="#e01818" stroke-width="1.500"/></symbol>
<symbol id="t2" viewBox="0 0 24 24"><path d="M1 3h22M6 1v22M18 1v22" fill="none" stroke="#603090"/><path d="M6 20c0-10 4-16 12-17" fill="none" stroke="#e06030" stroke-width="1.300"/></symbol>
<symbol id="chain" viewBox="0 0 24 24"><path d="M8 1h8v14H8z" fill="#f09020" stroke="#d01818"/><path d="M2 13h20v5H2z" fill="#e8e8e8" stroke="#666" stroke-width=".6"/><g fill="none" stroke="#c8b020" stroke-width="2"><rect x="1" y="19" width="7" height="4"/><rect x="8" y="19" width="7" height="4"/><rect x="15" y="19" width="7" height="4"/></g></symbol>
<symbol id="sel" viewBox="0 0 24 24"><path d="M1 4h7v5h8v5h3v9" fill="none" stroke="#c81010" stroke-width="2"/><path d="M10 0h7v7h-7zM15 5h6v6h-6zM19 9h5v6h-5z" fill="none" stroke="#1030d0"/><path d="M0 3h7" stroke="#f0a020" stroke-width="2.500"/><path d="M16 16v8M12 20h8" stroke="#111" stroke-width="1.500"/></symbol>
<symbol id="barr" viewBox="0 0 24 24"><path d="M3 8h10V2l9 10-9 10v-6H3z" fill="#2eb8c8" stroke="#1040a0"/></symbol>
<symbol id="note" viewBox="0 0 24 24"><path d="M2 8l16-4 3 10-15 6z" fill="#f4e070" stroke="#886"/><path d="M6 11l11-3M7 14l11-3" stroke="#3060c0"/></symbol>
<symbol id="bnut" viewBox="0 0 24 24"><path d="M7 2c5-1 8 2 7 6l-2 2 9 9-3 3-9-9-2 2c-4 1-6-3-5-7l3 3 3-1 1-3z" fill="#8b8b9c"/><path d="M14 1l4 3-2 3-2-2-7 12-2-2z" fill="#555"/><path d="M2 19l7-4 3 4-5 4z" fill="#f08a20"/></symbol>

<symbol id="chevu" viewBox="0 0 16 16"><path d="M2 11l6-6 6 6" fill="none" stroke="#5a5a5a" stroke-width="3"/></symbol>
<symbol id="chevk" viewBox="0 0 16 16"><path d="M2 12l6-6 6 6" fill="none" stroke="#111" stroke-width="3.400"/></symbol>
<symbol id="chevd" viewBox="0 0 16 16"><path d="M2 5l6 6 6-6" fill="none" stroke="#5a5a5a" stroke-width="3"/></symbol>
<symbol id="gear" viewBox="0 0 16 16"><circle cx="8" cy="8" r="4.600" fill="none" stroke="currentColor" stroke-width="2.800"/><path d="M8 .5v2.500M8 13v2.500M.5 8H3M13 8h2.500M2.700 2.700l1.800 1.800M11.500 11.500l1.800 1.800M2.700 13.300l1.800-1.800M11.500 4.500l1.800-1.800" stroke="currentColor" stroke-width="2"/></symbol>
<symbol id="chk" viewBox="0 0 16 16"><path d="M1 8l3-2 3 4 6-8 2 2-8 11z" fill="#1dbb38"/></symbol>
<symbol id="clock" viewBox="0 0 24 24"><circle cx="12" cy="12" r="10.500" fill="#dfe9f8" stroke="#8a8a8a" stroke-width="2"/><path d="M12 5v7h6" fill="none" stroke="#222" stroke-width="1.500"/></symbol>
<symbol id="mview" viewBox="0 0 24 24"><path d="M12 2 22 8v9l-10 6-10-6V8z" fill="#d8f4e4" stroke="#14a060" stroke-width="1.200"/><path d="M2 8l10 6 10-6M12 14v9M12 2v12M2 17l10-6 10 6" fill="none" stroke="#14a060" stroke-width=".8"/><path d="M8 24l10-5" stroke="#f07010" stroke-width="2"/></symbol>
<symbol id="cam" viewBox="0 0 24 24"><path d="M2 8l18-6 3 14-19 6z" fill="#fff" stroke="#d81818" stroke-width="1.200"/><circle cx="12" cy="11" r="4" fill="none" stroke="#1030c0" stroke-width="1.200"/><path d="M16 11h6v5h-6z" fill="#333"/></symbol>
<symbol id="ofolder" viewBox="0 0 24 24"><path d="M2 9h8l2 2h8v11H2z" fill="#c89020"/><path d="M1 22 5 11h18l-4 11z" fill="url(#yl)" stroke="#9a7010" stroke-width=".7"/></symbol>
<symbol id="expr" viewBox="0 0 24 24"><use href="#ofolder" width="24" height="24"/><path d="M11 3h9M11 7h9" stroke="#1030c0" stroke-width="1.500"/></symbol>
<symbol id="dcs" viewBox="0 0 24 24"><path d="M4 4v17l16-4" fill="none" stroke="#555" stroke-width="1.100"/><path d="M4 13l15-7" stroke="#20a030" stroke-width="1.500" stroke-dasharray="3 1"/><path d="M4 13 19 22" stroke="#888"/><path d="M1 4h6" stroke="#1030c0"/><path d="M3 8l9 10-6 2z" fill="#ddd" stroke="#666" stroke-width=".6"/></symbol>
<symbol id="harc" viewBox="0 0 24 24"><path d="M3 5c9-2 15 5 17 15" fill="none" stroke="#111" stroke-width="1.200"/><circle cx="3" cy="5" r="2" fill="#e01010"/><circle cx="20" cy="20" r="2" fill="#e01010"/></symbol>
<symbol id="asm" viewBox="0 0 24 24"><path d="M6 1l6 3v6l-6 3-5-3V4z" fill="#f6d878" stroke="#d09010" stroke-width=".6"/><path d="M14 8l4 2v3M15 14l5-2 4 2v6l-4 3-5-3z" fill="#f6d878" stroke="#d09010" stroke-width=".6"/><path d="M6 13v10M6 18h9M14 11h9" fill="none" stroke="#1030c0" stroke-width="1.100"/></symbol>
<symbol id="cnst" viewBox="0 0 24 24"><path d="M3 1v10l8-5zM21 1v10l-8-5z" fill="#1018c8"/><path d="M12 0v22" stroke="#888" stroke-dasharray="1 1"/><path d="M1 13h10v10H1z" fill="#f8e860" stroke="#b09010"/><path d="M14 23V12l10 11z" fill="#d81818"/></symbol>
<symbol id="part" viewBox="0 0 24 24"><path d="M1 3h9v10H1z" fill="#e060a0"/><ellipse cx="5.500" cy="4" rx="4.500" ry="2" fill="#f0a0c8"/><path d="M10 10h11M7 13v10M7 19h8" fill="none" stroke="#1030c0"/><circle cx="19" cy="19" r="4.500" fill="none" stroke="#a03090"/><circle cx="19" cy="19" r="1.500" fill="#a03090"/></symbol>
<symbol id="books" viewBox="0 0 24 24"><path d="M1 5l6-3v19H1z" fill="#f09020" stroke="#a05000" stroke-width=".5"/><path d="M7 5l6-3v19H7z" fill="#30b040" stroke="#107020" stroke-width=".5"/><path d="M13 5l6-3h4v16l-4 3h-6z" fill="#3090e0" stroke="#1060a0" stroke-width=".5"/></symbol>
<symbol id="inf" viewBox="0 0 24 24"><circle cx="9" cy="16" r="8" fill="#1070e0"/><circle cx="9" cy="16" r="6" fill="#30a0f0"/><path d="M8 14h2v7H8zM8 10h2v2H8z" fill="#fff"/><path d="M9 4c7 0 12 5 13 13M9 0c9 0 15 7 15 15" fill="none" stroke="#2060c0" stroke-width="2"/></symbol>
<symbol id="web" viewBox="0 0 24 24"><path d="M3 1h13l6 6v17H3z" fill="#fff" stroke="#1040c0" stroke-width="1.100"/><circle cx="12" cy="15" r="6" fill="#30a060"/><path d="M8 12c3-3 6-1 7 2l-3 5" fill="none" stroke="#30a0e0" stroke-width="2"/></symbol>
<symbol id="rain" viewBox="0 0 24 24"><path d="M1 1h8v22H1z" fill="#ffcc00"/><path d="M1 4h8v5H1z" fill="#e82020"/><path d="M1 9h8v5H1z" fill="#30d040"/><path d="M1 14h8v5H1z" fill="#20b0e0"/><path d="M1 19h8v4H1z" fill="#2020e0"/><path d="M12 6l10 16" stroke="#111" stroke-width="3"/><circle cx="11" cy="5" r="3" fill="#fff"/></symbol>
<symbol id="wnd" viewBox="0 0 24 24"><path d="M2 6l12-3-2 18-8-1z" fill="#3080d0"/><path d="M3 9h10M3 13h10M3 17h9" stroke="#a0d0f0"/><path d="M12 8l12-3-7 8 5-1-7 7" fill="none" stroke="#4090e0"/><path d="M12 8l7 13" stroke="#111" stroke-width="3"/><circle cx="12" cy="7" r="3" fill="#fff"/><path d="M2 21h10" stroke="#f0c020" stroke-width="2"/></symbol>
<symbol id="dor1" viewBox="0 0 24 24"><path d="M1 5l6-3v19l-6 2z" fill="#eee" stroke="#888"/><path d="M8 2h15v17H8z" fill="#fff" stroke="#888" stroke-width=".5"/><path d="M11 4h10v8H11z" fill="#e02020"/><path d="M11 13h10v5H11z" fill="#f0b070"/><path d="M14 5h4l2 7h-8z" fill="#a8d4f8"/></symbol>
<symbol id="dor2" viewBox="0 0 24 24"><path d="M1 5l6-3v19l-6 2z" fill="#eee" stroke="#888"/><path d="M8 2h15v17H8z" fill="#fff" stroke="#888" stroke-width=".5"/><circle cx="11" cy="6" r="2" fill="#2060e0"/><circle cx="11" cy="11" r="2" fill="#30b040"/><circle cx="11" cy="16" r="2" fill="#e02020"/><path d="M15 6h6M15 11h6M15 16h6" stroke="#555"/></symbol>
<symbol id="dor3" viewBox="0 0 24 24"><path d="M1 12l6-3v12l-6 2z" fill="#c8f0c8" stroke="#333"/><circle cx="18" cy="6" r="5" fill="#60c030"/><path d="M18 11v6h-7M15 14l-5 3 5 3" fill="none" stroke="#222" stroke-dasharray="2 1"/></symbol>
<symbol id="mag" viewBox="0 0 26 26"><circle cx="11" cy="11" r="8" fill="#f4f8fc" stroke="#8a8a8a" stroke-width="2"/><path d="M17 17l7 7" stroke="#777" stroke-width="3"/></symbol>
<symbol id="pipe" viewBox="0 0 26 26"><path d="M2 4v20M2 7h18" stroke="#1030c0"/><path d="M16 2v22" stroke="#1060a0" stroke-dasharray="2 1"/><path d="M2 5c10-1 18 3 21 10" fill="none" stroke="#e01010" stroke-width="1.400"/><circle cx="19" cy="18" r="5" fill="none" stroke="#1030c0"/></symbol>
</defs>
</svg>

<header class="titlebar">
  <svg class="tlogo"><use href="#nx"/></svg>
  <span class="ttext">NX 10.0.3.5 - 建模 - [_model1.prt （修改的） ]</span>
  <span class="siemens">SIEMENS</span>
  <div class="winbtns">
    <span class="wb">&#9602;</span><span class="wb">&#10064;</span><span class="wb close">X</span>
  </div>
</header>

<nav class="menubar">
  <span class="grip"></span>
  <svg class="mlogo"><use href="#mlg"/></svg>
  <span class="mi">文件<span class="k">(<u>F</u>)</span></span>
  <span class="mi">编辑<span class="k">(<u>E</u>)</span></span>
  <span class="mi">视图<span class="k">(<u>V</u>)</span></span>
  <span class="mi">插入<span class="k">(<u>S</u>)</span></span>
  <span class="mi">格式<span class="k">(<u>R</u>)</span></span>
  <span class="mi">工具<span class="k">(<u>T</u>)</span></span>
  <span class="mi">装配<span class="k">(<u>A</u>)</span></span>
  <span class="mi">信息<span class="k">(<u>I</u>)</span></span>
  <span class="mi">分析<span class="k">(<u>L</u>)</span></span>
  <span class="mi pref">首选项<span class="k">(<u>P</u>)</span></span>
  <span class="mi">窗口<span class="k">(<u>O</u>)</span></span>
  <span class="mi"><span class="k">GC</span>工具箱</span>
  <span class="mi">帮助<span class="k">(<u>H</u>)</span></span>
  <div class="mdi"><span class="mb">_</span><span class="mb">&#10064;</span><span class="mb">X</span></div>
</nav>

<div class="tb tb1">
  <span class="grip"></span>
  <svg class="i nxi"><use href="#nx"/></svg><span class="tt">启动</span><span class="a"></span>
  <svg class="i"><use href="#doc"/></svg><svg class="i"><use href="#folder"/></svg><svg class="i"><use href="#save"/></svg><svg class="i"><use href="#print"/></svg>
  <span class="s w7"></span>
  <svg class="i"><use href="#undo"/></svg><span class="a"></span><svg class="i"><use href="#redo"/></svg>
  <span class="s w5"></span>
  <svg class="i"><use href="#tube"/></svg><span class="a"></span>
  <span class="more"><b>»</b><span class="a"></span></span>
  <span class="s w8"></span>
  <svg class="i"><use href="#fit"/></svg><span class="a"></span><svg class="i"><use href="#fit"/></svg><svg class="i"><use href="#xyz"/></svg>
  <span class="tt regen">重新生成工作视图</span>
  <svg class="i"><use href="#shade"/></svg><span class="a"></span>
  <svg class="i"><use href="#cube"/></svg><span class="a"></span>
  <svg class="i"><use href="#cube"/></svg><svg class="i"><use href="#cubef"/></svg><svg class="i"><use href="#wire"/></svg><svg class="i"><use href="#wire"/></svg><svg class="i"><use href="#wire2"/></svg><svg class="i"><use href="#sect"/></svg><svg class="i"><use href="#wgrid"/></svg><span class="a"></span>
  <span class="s w8"></span>
  <svg class="i"><use href="#slab"/></svg><span class="a"></span><svg class="i"><use href="#slab"/></svg><svg class="i"><use href="#slab2"/></svg><span class="a low"></span>
  <span class="s w5"></span>
  <span class="grip"></span>
  <div class="combo clayer"><span class="cv">1</span><span class="dd"></span></div>
  <svg class="i ml4"><use href="#layers"/></svg><svg class="i"><use href="#layers"/></svg><span class="a"></span>
  <svg class="i ml3"><use href="#cs1"/></svg><span class="a"></span><svg class="i"><use href="#cs2"/></svg><svg class="i"><use href="#cs3"/></svg><svg class="i"><use href="#cs1"/></svg><svg class="i n3"><use href="#cs4"/></svg><svg class="i n2"><use href="#cs5"/></svg><svg class="i"><use href="#cs6"/></svg>
  <span class="s w9"></span>
  <svg class="i"><use href="#palette"/></svg>
  <span class="s w3"></span>
  <svg class="i"><use href="#dia1"/></svg><svg class="i"><use href="#dia2"/></svg>
  <span class="s w5"></span>
  <svg class="i"><use href="#ruled"/></svg><span class="a"></span><svg class="i"><use href="#meas"/></svg><span class="a"></span>
</div>

<div class="tb tb2 r2">
  <span class="grip"></span>
  <svg class="i"><use href="#plane"/></svg><span class="a"></span><svg class="i"><use href="#ext"/></svg><span class="a"></span><svg class="i"><use href="#ext"/></svg><svg class="i"><use href="#rev"/></svg><svg class="i"><use href="#cubeh"/></svg><svg class="i"><use href="#cubeb"/></svg><svg class="i"><use href="#cubep"/></svg><svg class="i"><use href="#cubeh"/></svg><svg class="i"><use href="#cubeb"/></svg><svg class="i"><use href="#cube"/></svg><svg class="i"><use href="#cyl"/></svg><svg class="i"><use href="#pyr"/></svg><svg class="i"><use href="#cube"/></svg><svg class="i"><use href="#cyl"/></svg><svg class="i"><use href="#cone"/></svg><svg class="i"><use href="#sph"/></svg><svg class="i"><use href="#cube"/></svg><svg class="i"><use href="#cyl"/></svg>
  <span class="s w9"></span>
  <svg class="i"><use href="#pad"/></svg><span class="a"></span><svg class="i"><use href="#oset"/></svg><svg class="i"><use href="#pins"/></svg><svg class="i"><use href="#hexp"/></svg><svg class="i"><use href="#split"/></svg><svg class="i"><use href="#teal"/></svg><span class="a"></span>
  <svg class="i"><use href="#boxd"/></svg><svg class="i"><use href="#arch"/></svg><svg class="i"><use href="#boxo"/></svg><span class="a"></span><svg class="i"><use href="#boxo"/></svg><svg class="i"><use href="#srf"/></svg><svg class="i"><use href="#rhom"/></svg><svg class="i"><use href="#fram"/></svg><span class="a"></span><svg class="i"><use href="#fram"/></svg><svg class="i"><use href="#ribb"/></svg><svg class="i"><use href="#ocyl"/></svg><svg class="i"><use href="#rbox"/></svg>
  <span class="s w7"></span>
  <svg class="i"><use href="#cham"/></svg><span class="a"></span><svg class="i"><use href="#cham"/></svg><svg class="i"><use href="#corn"/></svg><svg class="i"><use href="#pale"/></svg><svg class="i"><use href="#wcone"/></svg><span class="a low"></span>
</div>

<div class="tb tb2 r3">
  <span class="grip"></span>
  <svg class="i"><use href="#keyd"/></svg><svg class="i"><use href="#cv1"/></svg><svg class="i"><use href="#cv2"/></svg><svg class="i"><use href="#cv3"/></svg><svg class="i"><use href="#cv4"/></svg><span class="a low"></span>
  <span class="s w5"></span><span class="grip"></span>
  <svg class="i"><use href="#pmv"/></svg><span class="a"></span><svg class="i"><use href="#pmv"/></svg>
  <span class="hiddenrun"></span>
  <span class="a"></span><svg class="i"><use href="#prc"/></svg><svg class="i"><use href="#ptr"/></svg><svg class="i"><use href="#pwd"/></svg><span class="a"></span><svg class="i"><use href="#pmv2"/></svg><span class="a"></span><span class="a low tight"></span>
  <span class="s w7"></span><span class="grip"></span>
  <svg class="i"><use href="#quad"/></svg><span class="a"></span><svg class="i"><use href="#quad"/></svg><svg class="i"><use href="#rib"/></svg><span class="a"></span><svg class="i"><use href="#rib"/></svg><svg class="i"><use href="#rib2"/></svg><svg class="i"><use href="#grn"/></svg><svg class="i"><use href="#bpt"/></svg><svg class="i"><use href="#rgrid"/></svg><span class="a"></span><svg class="i"><use href="#rgrid"/></svg><svg class="i"><use href="#frm"/></svg><svg class="i"><use href="#dial"/></svg><svg class="i"><use href="#brl"/></svg><svg class="i"><use href="#whts"/></svg><svg class="i"><use href="#pgrid"/></svg><span class="a low"></span>
</div>

<main class="main">
  <aside class="tabs">
    <svg class="tabgear"><use href="#gear"/></svg>
    <span class="tab"><svg><use href="#asm"/></svg></span>
    <span class="tab"><svg><use href="#cnst"/></svg></span>
    <span class="tab on"><svg><use href="#part"/></svg></span>
    <span class="tab"><svg><use href="#books"/></svg></span>
    <span class="tab gap"><svg><use href="#inf"/></svg></span>
    <span class="tab gap"><svg><use href="#web"/></svg></span>
    <span class="tab gap"><svg><use href="#clock"/></svg></span>
    <span class="tab"><svg><use href="#rain"/></svg></span>
    <span class="tab"><svg><use href="#wnd"/></svg></span>
    <span class="tab"><svg><use href="#bnut"/></svg></span>
    <span class="tab"><svg><use href="#dor1"/></svg></span>
    <span class="tab"><svg><use href="#dor2"/></svg></span>
    <span class="tab"><svg><use href="#dor3"/></svg></span>
  </aside>

  <section class="nav">
    <div class="navhead"><span>部件导航器</span><span class="winicon"></span></div>
    <div class="tree">
      <div class="thead"><span>名称</span><span class="sort"></span></div>
      <svg class="tlines" viewBox="39 191 188 200" width="188" height="200"><path d="M48 221H58M48 221V296M68 311V341M68 321H80M68 341H80" fill="none" stroke="#777" stroke-dasharray="1 1"/></svg>
      <div class="rows">
        <div class="row"><svg class="ti"><use href="#clock"/></svg><span>历史记录模式</span></div>
        <div class="row"><span class="ex">+</span><svg class="ti"><use href="#mview"/></svg><span>模型视图</span></div>
        <div class="row"><span class="ex">+</span><svg class="ti chk"><use href="#chk"/></svg><svg class="ti cam"><use href="#cam"/></svg><span>摄像机</span></div>
        <div class="row"><span class="ex">+</span><svg class="ti"><use href="#expr"/></svg><span>用户表达式</span></div>
        <div class="row"><span class="ex">−</span><svg class="ti"><use href="#ofolder"/></svg><span>模型历史记录</span></div>
        <div class="row sub"><span class="cb"><svg><use href="#chk"/></svg></span><svg class="ti sm"><use href="#dcs"/></svg><span>基准坐标系 （0）</span></div>
        <div class="row sub"><span class="cb"><svg><use href="#chk"/></svg></span><svg class="ti sm"><use href="#harc"/></svg><b>圆弧 （2）</b></div>
        <div class="row"></div><div class="row"></div><div class="row"></div><div class="row"></div><div class="row"></div><div class="row"></div><div class="row"></div><div class="row"></div><div class="row"></div><div class="row"></div><div class="row"></div><div class="row"></div><div class="row"></div><div class="row"></div><div class="row"></div><div class="row"></div>
      </div>
      <div class="hscroll"><span class="sb l"></span><span class="thumb"></span><span class="track"></span><span class="sb r"></span></div>
    </div>
    <div class="splitter"><i></i></div>
    <div class="acc"><span>相依性</span><em><svg><use href="#chevd"/></svg></em></div>
    <div class="acc"><span>细节</span><em><svg><use href="#chevd"/></svg></em></div>
    <div class="acc"><span>预览</span><em><svg><use href="#chevd"/></svg></em></div>
  </section>

  <div class="canvas">
    <svg class="scene" viewBox="239 154 1315 638" width="1315" height="638">
      <ellipse cx="873" cy="423.500" rx="168.500" ry="147.800" transform="rotate(10 873 423.500)" fill="none" stroke="#f09a3e" stroke-width="2.800"/>
      <g stroke="#1414f0" fill="none" stroke-width="1.400">
        <path d="M873 424 1000 442"/><path d="M873 424 887 312" stroke-width="1.800"/>
        <path d="M883 367 947 376 939 433M878 393 944 402"/>
      </g>
      <path d="M1005 443 989 437 988 446zM888 308 883 322 892 323z" fill="#1414f0"/>
      <path d="M869 424h8M873 420v8" stroke="#aab" fill="none"/>
      <text x="1007" y="450" class="ax">X</text><text x="885" y="306" class="ax">Y</text><text x="881" y="363" class="ax">Z</text>
      <path d="M297 707 318 710 315 740 293 735z" fill="#a4a4a4"/><path d="M295 717 317 720M294 727 316 730" stroke="#777" fill="none"/>
      <path d="M293 735 297 700" stroke="#2a9030" stroke-width="1.500"/><path d="M293 735 296 713" stroke="#1030d0" stroke-width="2.200"/><path d="M293 735 328 740" stroke="#c82020" stroke-width="1.500"/><path d="M329 740 318 736 318 743z" fill="#c82020"/>
      <circle cx="293" cy="736" r="4" fill="#ddd"/>
      <text x="294" y="703" class="tx gy">Y</text><text x="330" y="747" class="tx rx">X</text>
    </svg>
  </div>

  <aside class="right">
    <span class="rgrip"></span>
    <div class="ri first"><svg><use href="#line"/></svg><span class="a"></span></div>
    <div class="ri"><svg><use href="#line"/></svg></div>
    <div class="ri"><svg><use href="#arc3"/></svg></div>
    <div class="ri"><svg><use href="#ptch"/></svg></div>
    <div class="ri"><svg><use href="#rect"/></svg></div>
    <div class="ri"><svg><use href="#bluearc"/></svg></div>
    <div class="ri"><svg><use href="#stud"/></svg></div>
    <div class="ri letter">A</div>
    <div class="ri"><svg><use href="#heart"/></svg></div>
    <div class="ri"><svg><use href="#srfb"/></svg></div>
    <div class="ri"><svg><use href="#cfold"/></svg></div>
    <div class="ri"><svg><use href="#sphc"/></svg></div>
    <div class="ri"><svg><use href="#cfold2"/></svg></div>
    <div class="ri"><svg><use href="#plar"/></svg></div>
    <div class="ri"><svg><use href="#crx"/></svg></div>
    <div class="ri"><svg><use href="#bk"/></svg></div>
    <div class="ri"><svg><use href="#dpl"/></svg></div>
    <div class="ri"><svg><use href="#fr2"/></svg></div>
    <div class="ri"><svg><use href="#cya"/></svg></div>
  </aside>
</main>

<div class="btb">
  <div class="combo cf1"><span class="cv">无选择过滤器</span><span class="dd"></span></div>
  <div class="combo cf2"><span class="cv">仅在工作部件内</span><span class="dd"></span></div>
  <svg class="i fade"><use href="#lnk"/></svg>
  <span class="s w6"></span>
  <svg class="i"><use href="#ffb"/></svg><svg class="i"><use href="#ffr"/></svg><span class="a"></span><svg class="i"><use href="#ucr"/></svg><svg class="i"><use href="#gch"/></svg>
  <span class="s w3"></span>
  <svg class="i"><use href="#drect"/></svg><span class="a"></span>
  <span class="s w6"></span>
  <svg class="i"><use href="#rsec"/></svg><svg class="i"><use href="#bsec"/></svg>
  <span class="s w6"></span>
  <div class="combo cf3"><span class="cv">相切曲线</span><span class="dd"></span></div>
  <svg class="i ml4"><use href="#t1"/></svg><svg class="i"><use href="#t2"/></svg><svg class="i"><use href="#chain"/></svg><svg class="i"><use href="#sel"/></svg><svg class="i"><use href="#barr"/></svg>
  <span class="s w6"></span>
  <svg class="i"><use href="#gnode"/></svg><svg class="i"><use href="#gline"/></svg><svg class="i"><use href="#gline"/></svg><svg class="i"><use href="#gs"/></svg><svg class="i"><use href="#gspl"/></svg><svg class="i"><use href="#gt"/></svg><svg class="i"><use href="#gc"/></svg><svg class="i"><use href="#gc2"/></svg><svg class="i"><use href="#gx"/></svg><svg class="i"><use href="#gline"/></svg><svg class="i"><use href="#gsr"/></svg>
  <span class="s w3"></span>
  <svg class="i"><use href="#ggrid"/></svg>
  <span class="s w12"></span>
  <svg class="i note"><use href="#note"/></svg>
  <span class="upd">更新以获取外部更改</span>
  <span class="a end"></span>
</div>

<footer class="status"><b class="cue">选择管道中心线路径的曲线</b><span class="cell"></span></footer>

<div class="dialog">
  <div class="dtitle">
    <svg class="dgear"><use href="#gear"/></svg>
    <b>管道</b>
    <span class="dbtn">↻</span><span class="dbtn x">✖</span>
  </div>
  <div class="dbody">
    <div class="sh"><span>路径</span><em><svg><use href="#chevu"/></svg></em></div>
    <div class="sb1 pickrow">
      <div class="pill"><svg class="pchk"><use href="#chk"/></svg><span>选择曲线 （1）</span></div>
      <span class="pbtn"><svg><use href="#pipe"/></svg></span>
    </div>
    <div class="sh"><span>横截面</span><em><svg><use href="#chevu"/></svg></em></div>
    <div class="sb1 fields">
      <div class="fr"><label>外径</label><div class="num"><span class="nv">28</span><span class="un">mm</span><span class="dd arr"></span></div></div>
      <div class="fr"><label>内径</label><div class="num"><span class="nv">0</span><span class="un">mm</span><span class="dd arr"></span></div></div>
    </div>
    <div class="sh sep1"><span>布尔</span><em><svg><use href="#chevd"/></svg></em></div>
    <div class="sh sep1"><span>设置</span><em><svg><use href="#chevu"/></svg></em></div>
    <div class="sb1 fields set">
      <div class="fr"><label>输出</label><div class="combo cout"><span class="cv">多段</span><span class="dd"></span></div></div>
      <div class="fr"><label>公差</label><div class="tol">0.0254</div></div>
    </div>
    <div class="sh tall"><span>预览</span><em><svg><use href="#chevu"/></svg></em></div>
    <div class="sb1 pv"><span>显示结果</span><span class="pbtn grey"><svg><use href="#mag"/></svg></span></div>
    <div class="more3"><svg><use href="#chevk"/></svg><svg><use href="#chevk"/></svg><svg><use href="#chevk"/></svg></div>
    <div class="actions">
      <span class="btn ok">确定</span><span class="btn">应用</span><span class="btn">取消</span>
    </div>
  </div>
  <svg class="scribble" viewBox="259 101 352 439" width="352" height="439"><path d="M455 380C480 380 515 380 533 378 545 374 546 362 537 352 528 340 505 336 483 336 468 336 456 345 453 358 453 366 458 374 470 378" fill="none" stroke="#1fd8d8" stroke-width="6" stroke-linecap="round"/></svg>
</div>

<div class="watermark">
  <svg class="hex" viewBox="0 0 78 82" width="78" height="82"><path d="M39 0 78 20v42L39 82 0 62V20z" fill="#3fa0dc" opacity=".62"/><path d="M39 0 78 20v16L60 26 39 14 22 24 0 40V20z" fill="#6a8a9a" opacity=".75"/><path d="M39 18 60 30v24L39 66 18 54V30z" fill="#0b0b0b" opacity=".45"/><path d="M39 30 56 38v16L39 62 22 54V38z" fill="#7fc4ec" opacity=".7"/></svg>
  <div class="wmt"><span class="wm3"><span class="wd">3D</span>世界网</span><span class="wms">WWW.3DSJW.COM</span></div>
</div>

<div class="tag"><span>返场</span></div>
<div class="ime">
  <span class="sg">S</span><b class="en">英</b><b class="pn">，</b>
  <span class="imei round">☺</span>
  <svg class="imeg" viewBox="0 0 20 20"><path d="M7 1h6v11H7z" fill="#1f7fd8"/><path d="M4 9c0 8 12 8 12 0M10 15v4M6 19h8" fill="none" stroke="#1f7fd8" stroke-width="2"/></svg>
  <svg class="imeg" viewBox="0 0 20 20"><path d="M1 4h18v13H1z" fill="#1f7fd8"/><path d="M3 7h14M3 10h14M6 14h8" stroke="#fff" stroke-width="1.500" stroke-dasharray="2 1"/></svg>
  <svg class="imeg" viewBox="0 0 20 20"><circle cx="9" cy="5" r="4" fill="#b8c4d0"/><path d="M3 18c0-9 12-9 12 0z" fill="#b8c4d0"/><path d="M13 12h6v7h-6z" fill="#1f7fd8"/></svg>
  <svg class="imeg" viewBox="0 0 20 20"><path d="M6 2h8l5 4-3 3-1-1v10H5V8L4 9 1 6z" fill="#1f7fd8"/></svg>
  <svg class="imeg" viewBox="0 0 20 20"><path d="M1 1h8v8H1zM11 1h8v8h-8zM1 11h8v8H1zM11 11h8v8h-8z" fill="#1f7fd8"/></svg>
</div>
</body>
</html>
```
FILE: styles.css
```css
* { box-sizing: border-box; }
html, body { margin: 0; padding: 0; }
body {
  width: 1595px; height: 850px; overflow: hidden; position: relative;
  display: flex; flex-direction: column; background: #000;
  font-family: "Noto Sans CJK SC", "Liberation Sans", sans-serif; font-size: 15px; color: #111;
}
.defs { position: absolute; }
svg { display: block; flex: none; }
em { font-style: normal; }

/* title bar */
.titlebar {
  height: 26px; flex: none; display: flex; align-items: center; position: relative;
  background: linear-gradient(#8a8a8a 0, #555 5px, #191919 6px, #191919 25px, #fff 25px);
  color: #fff;
}
.tlogo { width: 22px; height: 22px; margin-left: 3px; }
.ttext { margin-left: 2px; font-family: "Liberation Mono", "Noto Sans CJK SC", monospace; font-size: 15px; white-space: pre; line-height: 20px; padding-top: 3px; font-weight: 700; word-spacing: .5px; }
.siemens { position: absolute; left: 1436px; top: 6px; font: 700 15px/18px "Liberation Sans", sans-serif; letter-spacing: -.2px; }
.winbtns { position: absolute; right: 0; top: 4px; display: flex; gap: 1px; }
.wb { width: 22px; height: 18px; border-radius: 3px; background: linear-gradient(#7a7a7a, #333); border: 1px solid #999; font: 700 11px/15px "DejaVu Sans", sans-serif; text-align: center; }
.wb.close { width: 18px; background: linear-gradient(#f09070, #e04010); border-color: #d0a090; font: 700 15px/16px "Liberation Sans", sans-serif; }

/* menu */
.menubar {
  height: 26px; flex: none; display: flex; align-items: center; gap: 15px; padding-left: 5px; position: relative;
  background: linear-gradient(#ececec, #dcdcdc); border-bottom: 1px solid #b0b0b0;
  white-space: nowrap;
}
.menubar .grip { height: 20px; margin-right: -15px; }
.mlogo { width: 18px; height: 22px; margin-left: 2px; margin-right: -8px; }
.mi { line-height: 22px; padding-bottom: 2px; }
.k { font: 400 12px "Liberation Mono", monospace; }
.pref { margin-left: 16px; }
.mdi { position: absolute; left: 1540px; top: 4px; display: flex; gap: 2px; }
.mb { width: 17px; height: 17px; border: 1px solid #888; border-radius: 4px; background: linear-gradient(#f8f8f8, #c8c8c8); font: 700 11px/14px "DejaVu Sans", sans-serif; text-align: center; color: #555; }

/* toolbars */
.tb {
  height: 34px; flex: none; display: flex; align-items: center; padding-left: 6px;
  background: linear-gradient(#e6e6e6, #d4d4d4); border-bottom: 1px solid #b8b8b8; border-top: 1px solid #f2f2f2;
  white-space: nowrap; overflow: hidden;
}
.tb1 { padding-left: 8px; }
.tb1 .a, .r3 .a { width: 12px; }
.tb2 { background: linear-gradient(#e0e0e0, #cfcfcf); position: relative; }
.tb2::after { content: ""; position: absolute; top: 0; bottom: 0; background: #cbcbcb; right: 0; border-left: 1px solid #ddd; }
.r2::after { left: 1358px; }
.r3::after { left: 1282px; }
.grip { width: 3px; height: 26px; flex: none; background: repeating-linear-gradient(#9a9a9a 0 2px, #f4f4f4 2px 4px); }
.i { width: 24px; height: 24px; margin: 0 3.5px; flex: none; }
.nxi { margin-left: 2px; margin-right: 1px; }
.tt { line-height: 22px; padding-bottom: 2px; }
.regen { margin: 0 3px 0 4px; width: 120px; white-space: nowrap; }
.a { width: 11px; height: 24px; flex: none; display: flex; align-items: center; justify-content: center; }
.a::after { content: ""; border: 3.5px solid transparent; border-top: 4px solid #111; border-bottom: 0; }
.a.low { align-items: flex-end; padding-bottom: 3px; }
.a.tight { margin-left: -2px; }
.s { height: 30px; flex: none; position: relative; }
.s::after { content: ""; position: absolute; left: 50%; top: 0; bottom: 0; width: 2px; background: linear-gradient(90deg, #a8a8a8 50%, #f6f6f6 50%); }
.w3 { width: 4px; } .w5 { width: 5px; } .w6 { width: 7px; } .w7 { width: 7px; } .w8 { width: 8px; } .w9 { width: 9px; } .w12 { width: 18px; }
.more { width: 17px; display: flex; flex-direction: column; align-items: center; height: 30px; }
.more b { font: 700 12px/14px "Liberation Sans", sans-serif; }
.more .a { height: 14px; }
.ml4 { margin-left: 6px; }
.ml3 { margin-left: 6px; }
.n2 { margin-left: 5px; }
.n3 { margin-left: 5px; margin-right: 2px; }
.hiddenrun { width: 361px; flex: none; }
.fade { opacity: .75; margin-left: 6px; }

/* combo */
.combo { display: flex; height: 20px; background: #fff; border: 1px solid #666; border-radius: 3px; box-shadow: 0 0 0 1px #eee; flex: none; }
.cv { flex: 1; padding-left: 2px; line-height: 16px; font-size: 15px; white-space: nowrap; }
.dd { width: 20px; flex: none; display: flex; align-items: center; justify-content: center; background: linear-gradient(#2f7fd0, #6aa8e4 45%, #d6e9fa); border-radius: 0 2px 2px 0; }
.dd::after { content: ""; border: 6px solid transparent; border-top: 6px solid #16223a; border-bottom: 0; }
.dd.arr::after { width: 11px; height: 13px; border: 0; background: #0d1f50; clip-path: polygon(30% 0, 70% 0, 70% 50%, 100% 50%, 50% 100%, 0 50%, 30% 50%); }
.clayer { width: 51px; height: 21px; margin-left: 2px; }
.clayer .cv { font: 400 15px/19px "Liberation Mono", monospace; }
.cf1 { width: 145px; margin: 0 10px 0 6px; }
.cf2 { width: 154px; }
.cf3 { width: 155px; margin-left: 2px; }
.cout { width: 128px; height: 20px; }
.cout .cv { padding-left: 4px; }

/* main */
.main { height: 638px; flex: none; display: flex; }
.tabs { width: 31px; flex: none; background: #b2b2b2; display: flex; flex-direction: column; align-items: flex-end; position: relative; }
.tabgear { width: 14px; height: 14px; color: #333; margin: 8px 9px 24px 0; }
.tab { width: 27px; height: 40px; margin-bottom: 2px; flex: none; background: linear-gradient(#ececec, #d2d2d2); border: 1px solid #8c8c8c; border-right: 0; border-radius: 4px 0 0 4px; display: flex; align-items: center; justify-content: center; }
.tab svg { width: 25px; height: 25px; }
.tab.on { width: 31px; height: 44px; margin: -1px 0 1px; background: #f2f2f2; position: relative; }
.tab.gap { margin-top: 12px; }
.nav { width: 208px; flex: none; background: #e9e9e9; padding: 0 0 0 7px; display: flex; flex-direction: column; }
.navhead { height: 36px; flex: none; display: flex; align-items: center; justify-content: space-between; padding: 1px 15px 2px 6px; font-weight: 700; font-size: 15px; }
.winicon { width: 15px; height: 14px; border: 1px solid #111; border-top-width: 3px; background: #fff; }
.tree { width: 191px; height: 506px; flex: none; border: 1px solid #7e7e7e; background: #fff; display: flex; flex-direction: column; position: relative; padding: 0 1px 2px; }
.thead { height: 19px; flex: none; display: flex; align-items: center; padding-left: 7px; background: linear-gradient(#f0f0f0, #d4d4d4); border-bottom: 1px solid #9a9a9a; margin-top: 1px; line-height: 16px; }
.sort { margin-left: 16px; border: 5px solid transparent; border-bottom: 5px solid #222; border-top: 0; }
.tlines { position: absolute; left: 0; top: 0; pointer-events: none; z-index: 1; }
.rows { flex: 1; }
.row { height: 20px; display: flex; align-items: center; padding: 0 0 2px 19px; border-bottom: 1px solid #e2e2e2; white-space: nowrap; line-height: 16px; background: #fff; }
.row:nth-child(even) { background: #f5f5f5; }
.ex { width: 9px; height: 9px; border: 1px solid #888; background: #fff; font: 400 9px/7px "Liberation Mono", monospace; text-align: center; margin-left: -15px; margin-right: 8px; flex: none; position: relative; z-index: 2; }
.ti { width: 17px; height: 17px; margin-right: 3px; flex: none; }
.ti.chk { width: 13px; height: 13px; margin-right: 2px; }
.ti.cam { width: 18px; height: 18px; margin-right: 2px; }
.row.sub { padding-left: 40px; }
.cb { width: 12px; height: 12px; border: 1px solid #111; background: #fff; flex: none; margin-right: 2px; }
.cb svg { width: 12px; height: 12px; margin: -1px 0 0 -1px; }
.ti.sm { width: 15px; height: 15px; margin-right: 4px; }
.sub b { font-weight: 700; }
.hscroll { height: 21px; flex: none; display: flex; margin-top: 3px; padding: 0 1px; }
.sb { width: 19px; background: #d4d0c8; border: 1px solid; border-color: #f4f4f4 #555 #555 #f4f4f4; display: flex; align-items: center; justify-content: center; flex: none; }
.sb::after { content: ""; border: 5px solid transparent; }
.sb.l::after { border-right: 6px solid #000; border-left: 0; }
.sb.r::after { border-left: 6px solid #000; border-right: 0; }
.thumb { width: 48px; background: #d4d0c8; border: 1px solid; border-color: #f4f4f4 #555 #555 #f4f4f4; flex: none; }
.track { flex: 1; background: repeating-conic-gradient(#d4d0c8 0 25%, #f4f4f4 0 50%) 0 0 / 2px 2px; }
.splitter { height: 12px; flex: none; width: 191px; display: flex; justify-content: center; align-items: center; background: linear-gradient(transparent 5px, #fff 5px, #fff 6px, transparent 6px); }
.splitter i { display: block; width: 30px; height: 5px; background: #d4d4d4; border: 1px solid #aaa; }
.acc { width: 190px; height: 25px; flex: none; margin-bottom: 1px; margin-left: 1px; display: flex; justify-content: space-between; color: #10105e; background: linear-gradient(#f6f6f6 55%, #dcdcdc 56%, #d8d8d8); border-bottom: 1px solid #999; line-height: 22px; padding-left: 7px; }
.acc em { width: 26px; border-left: 1px solid #aaa; box-shadow: inset 1px 0 #fff; display: flex; align-items: center; justify-content: center; flex: none; }
.acc em svg, .sh em svg { width: 14px; height: 14px; }
.canvas { width: 1315px; flex: none; background: #000; position: relative; }
.scene { display: block; }
.ax { font: 400 13px "Liberation Sans", sans-serif; fill: #1414f0; }
.tx { font: 400 11px "Liberation Sans", sans-serif; }
.gy { fill: #2a9030; } .rx { fill: #c82020; }
.right { flex: 1; background: #d4d4d4; border-left: 1px solid #eee; position: relative; display: flex; flex-direction: column; padding-top: 4px; }
.rgrip { display: block; height: 3px; width: 28px; margin-left: 9px; flex: none; background: repeating-linear-gradient(90deg, #9a9a9a 0 2px, #f4f4f4 2px 4px); }
.ri { height: 31px; flex: none; padding-left: 10px; display: flex; align-items: center; position: relative; }
.ri svg { width: 25px; height: 25px; }
.ri.first { height: 29px; margin-top: 1px; }
.ri .a { position: absolute; right: 0; top: 4px; width: 8px; }
.letter { font: 700 26px/31px "Liberation Serif", serif; padding-left: 13px; }

/* bottom */
.btb { height: 34px; flex: none; display: flex; align-items: center; background: linear-gradient(#bdbdbd 0, #d8d8d8 3px, #d0d0d0); border-bottom: 1px solid #eee; white-space: nowrap; overflow: hidden; }
.note { margin-left: 2px; margin-right: 0; width: 20px; height: 20px; }
.upd { margin-left: 2px; line-height: 18px; padding-bottom: 2px; width: 205px; flex: none; }
.a.end { margin-left: auto; align-items: flex-end; }
.status { height: 24px; flex: none; display: flex; background: linear-gradient(#e2e2e2, #d4d4d4 90%, #888); }
.cue { width: 743px; font-size: 16px; line-height: 20px; padding-left: 4px; font-weight: 700; border-right: 1px solid #f4f4f4; }
.cell { flex: 1; }

/* dialog */
.dialog { position: absolute; left: 259px; top: 101px; width: 352px; height: 439px; background: linear-gradient(#e9e9e9 432px, #1a1a1a 432px, #2b2b2b 439px); display: flex; flex-direction: column; }
.dtitle { height: 24px; flex: none; display: flex; align-items: center; color: #fff; background: linear-gradient(#6c6c6c, #2a2a2a 35%, #141414); border-radius: 3px 3px 0 0; border-bottom: 1px solid #000; }
.dgear { width: 15px; height: 15px; margin: 0 6px 0 5px; }
.dtitle b { flex: 1; padding-left: 8px; border-left: 1px solid #aaa; font-size: 16px; line-height: 20px; padding-bottom: 2px; }
.dbtn { width: 25px; height: 23px; border-left: 1px solid #aaa; font: 700 15px/22px "DejaVu Sans", sans-serif; text-align: center; flex: none; }
.dbody { flex: 1; padding: 4px 7px 0; display: flex; flex-direction: column; }
.sh { height: 25px; flex: none; display: flex; justify-content: space-between; background: linear-gradient(#f8f8f8 55%, #e6e6e6 56%, #dedede); border-bottom: 1px solid #999; line-height: 22px; color: #10105e; padding-left: 6px; }
.sh em { width: 26px; border-left: 1px solid #aaa; box-shadow: inset 1px 0 #fff; display: flex; align-items: center; justify-content: center; flex: none; }
.sep1 { margin-top: 1px; }
.tall { height: 26px; }
.sb1 { flex: none; background: #d0d0d0; border-left: 1px solid #aaa; border-right: 1px solid #aaa; padding: 0 8px; }
.pickrow { height: 48px; display: flex; align-items: center; justify-content: space-between; padding: 0 8px 0 7px; }
.pill { width: 286px; height: 31px; border-radius: 6px; background: linear-gradient(90deg, #e2a569, #dfb48a 50%, #d4c5b4 85%, #d0d0d0); display: flex; align-items: center; padding-bottom: 3px; }
.pchk { width: 14px; height: 14px; margin: 3px 6px 0 1px; }
.pbtn { width: 30px; height: 30px; border: 1px solid #666; border-radius: 3px; background: linear-gradient(#f8a868, #f8d8b0); display: flex; align-items: center; justify-content: center; flex: none; }
.pbtn svg { width: 26px; height: 26px; }
.pbtn.grey { background: linear-gradient(#fafafa, #cfcfcf); }
.fields { height: 64px; padding-top: 8px; display: flex; flex-direction: column; gap: 4px; }
.fr { height: 21px; display: flex; align-items: center; justify-content: space-between; flex: none; }
.fr label { line-height: 16px; padding-bottom: 3px; }
.num { width: 128px; height: 21px; display: flex; background: #fff; border: 1px solid #777; border-radius: 3px; }
.nv { width: 71px; padding-left: 3px; font: 400 15px/19px "Liberation Mono", monospace; }
.un { width: 36px; padding-left: 3px; background: #d0d0d0; font: 400 14px/19px "Liberation Mono", monospace; letter-spacing: -1px; }
.set { height: 62px; padding-top: 9px; }
.set .fr:nth-child(2) { height: 20px; }
.tol { width: 72px; height: 20px; background: #fff; border: 1px solid #888; border-radius: 3px; text-align: right; padding-right: 2px; font: 400 14px/18px "Liberation Mono", monospace; }
.pv { height: 47px; display: flex; align-items: center; justify-content: flex-end; gap: 3px; padding-bottom: 1px; }
.pv > span:first-child { line-height: 18px; padding-bottom: 3px; }
.more3 { height: 13px; flex: none; display: flex; justify-content: center; gap: 0; align-items: center; background: linear-gradient(#f4f4f4, #e0e0e0); border-bottom: 1px solid #999; border-left: 1px solid #ccc; border-right: 1px solid #999; }
.more3 svg { width: 15px; height: 12px; }
.actions { margin-top: 4px; border-top: 1px solid #fff; box-shadow: 0 -1px #bbb; padding: 6px 11px 0 0; display: flex; justify-content: flex-end; gap: 8px; }
.btn { width: 57px; height: 21px; border: 1px solid #666; border-radius: 3px; background: linear-gradient(#f6f6f6, #cccccc); text-align: center; line-height: 16px; font-size: 15px; }
.btn.ok { background: linear-gradient(#d8f0c8, #7cc860); }
.scribble { position: absolute; left: 0; top: 0; pointer-events: none; }

/* overlays */
.watermark { position: absolute; left: 1313px; top: 755px; display: flex; pointer-events: none; }
.wmt { display: flex; flex-direction: column; margin-left: 2px; }
.wm3 { font: 700 38px/38px "Noto Sans CJK SC", "Liberation Sans", sans-serif; color: rgba(255,255,255,.56); margin-top: 12px; white-space: nowrap; }
.wd { font: 700 48px/38px "Liberation Sans", sans-serif; letter-spacing: -1px; margin-right: 2px; }
.wms { font: 400 12px/12px "Liberation Sans", sans-serif; letter-spacing: 4px; color: rgba(255,255,255,.6); margin-top: 9px; white-space: nowrap; }
.tag { position: absolute; left: 1569px; top: 747px; width: 23px; height: 43px; background: linear-gradient(#1a1a1a 11px, #e8323c 11px); border-radius: 6px 6px 6px 8px; color: #fff; font-weight: 700; font-size: 11px; line-height: 13px; display: flex; align-items: flex-end; justify-content: center; writing-mode: vertical-rl; padding-right: 5px; padding-bottom: 1px; }
.ime { position: absolute; left: 1395px; top: 825px; width: 200px; height: 25px; background: #fff; display: flex; align-items: center; gap: 3px; }
.sg { width: 27px; height: 25px; background: #f0562a; color: #fff; border-radius: 3px; text-align: center; font: italic 700 21px/25px "Liberation Sans", sans-serif; margin-right: 2px; flex: none; }
.en { color: #1f7fd8; font-size: 15px; line-height: 20px; padding-bottom: 3px; margin-left: 2px; margin-right: 1px; }
.pn { color: #1f7fd8; font-size: 15px; line-height: 20px; padding-bottom: 3px; width: 16px; flex: none; }
.imei { width: 19px; flex: none; color: #1f7fd8; font: 400 20px/25px "DejaVu Sans", sans-serif; text-align: center; }
.imeg { width: 18px; height: 18px; margin: 0 1px; }
```
